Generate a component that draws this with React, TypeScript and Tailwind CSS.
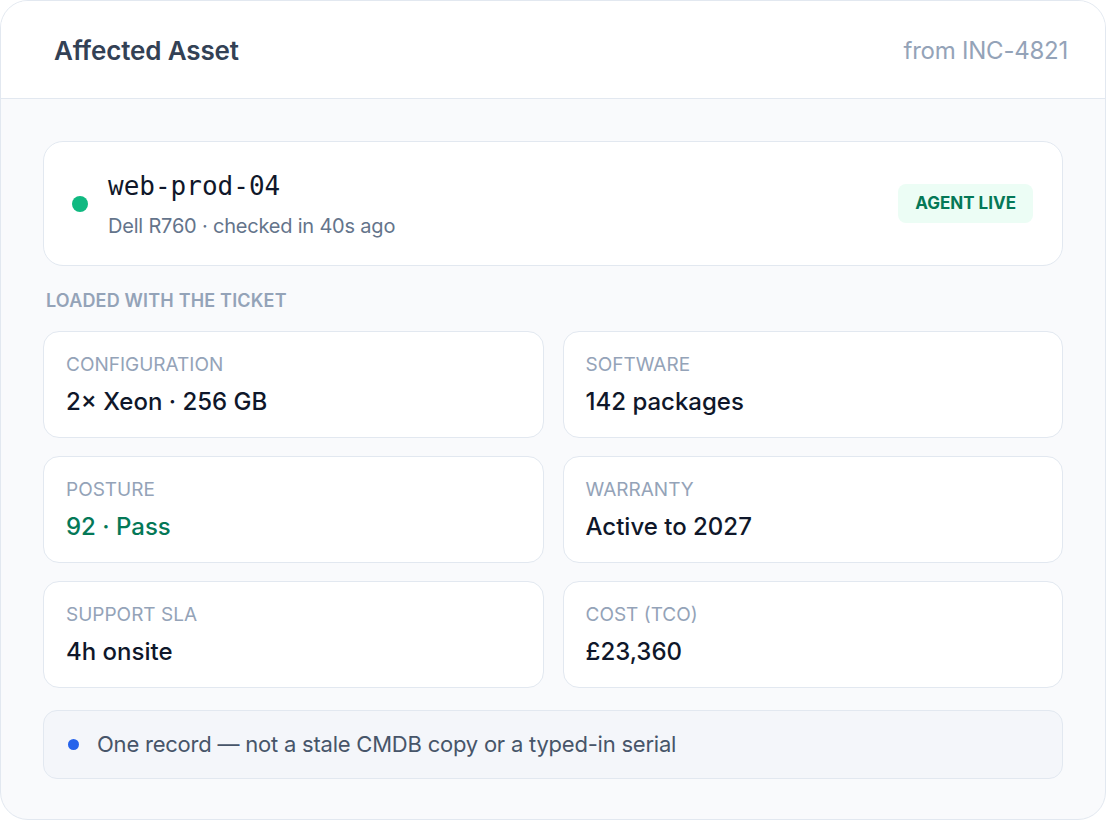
import React from 'react';

const sans = { fontFamily: 'Inter, "Noto Sans", sans-serif' };

interface Fact {
  label: string;
  value: string;
  tone?: 'good';
}

const facts: Fact[] = [
  { label: 'Configuration', value: '2× Xeon · 256 GB' },
  { label: 'Software', value: '142 packages' },
  { label: 'Posture', value: '92 · Pass', tone: 'good' },
  { label: 'Warranty', value: 'Active to 2027' },
  { label: 'Support SLA', value: '4h onsite' },
  { label: 'Cost (TCO)', value: '£23,360' },
];

function FactCard({ fact }: { fact: Fact }) {
  return (
    <div className="h-[107px] rounded-[16px] border border-[#e2e8f0] bg-white px-[22px] pt-[21px]">
      <div className="text-[19px] leading-[24px] uppercase text-[#94a3b8]">{fact.label}</div>
      <div
        className={
          'mt-[9px] text-[24px] leading-[32px] font-medium ' +
          (fact.tone === 'good' ? 'text-[#047857]' : 'text-[#0f172a]')
        }
      >
        {fact.value}
      </div>
    </div>
  );
}

export default function App() {
  return (
    <div className="w-[1106px] h-[820px] bg-white" style={sans}>
      <div className="h-full rounded-[28px] border border-[#e2e8f0] overflow-hidden bg-[#f9fafc] flex flex-col">
        {/* Header */}
        <div className="h-[98px] shrink-0 bg-white border-b border-[#e2e8f0] flex items-center justify-between pt-[2px] pl-[53px] pr-[37px]">
          <h1 className="text-[26px] font-semibold text-[#334155] tracking-[-0.005em]">Affected Asset</h1>
          <span className="text-[24px] text-[#94a3b8] tracking-[-0.01em]">from INC-4821</span>
        </div>

        {/* Body */}
        <div className="px-[42px] pt-[42px]">
          <div className="h-[125px] rounded-[20px] border border-[#e2e8f0] bg-white flex items-center pl-[28px] pr-[29px]">
            <span className="w-[16px] h-[16px] rounded-full bg-[#10b981] shrink-0" />
            <div className="ml-[20px] mt-[2px] flex-1">
              <div
                className="text-[26px] leading-[32px] text-[#0f172a]"
                style={{ fontFamily: '"DejaVu Sans Mono", "Liberation Mono", monospace' }}
              >
                web-prod-04
              </div>
              <div className="mt-[11px] text-[20px] leading-[26px] text-[#64748b] tracking-[-0.01em]">
                Dell R760 · checked in 40s ago
              </div>
            </div>
            <span className="h-[39px] px-[17px] rounded-[8px] bg-[#ecfdf5] text-[#047857] text-[17px] font-bold flex items-center">
              AGENT LIVE
            </span>
          </div>

          <div className="mt-[23px] mb-[18px] pl-[3px] text-[18px] leading-[24px] font-semibold uppercase text-[#94a3b8] tracking-[0.01em]">
            Loaded with the ticket
          </div>

          <div className="grid grid-cols-2 gap-x-[19px] gap-y-[18px]">
            {facts.map((f) => (
              <FactCard key={f.label} fact={f} />
            ))}
          </div>

          <div className="mt-[22px] h-[69px] rounded-[14px] border border-[#e2e8f0] bg-[#f4f6fa] flex items-center pl-[24px]">
            <span className="w-[11px] h-[11px] rounded-full bg-[#2563eb] shrink-0" />
            <span className="ml-[18px] text-[22px] text-[#475569] tracking-[-0.01em]">
              One record — not a stale CMDB copy or a typed-in serial
            </span>
          </div>
        </div>
      </div>
    </div>
  );
}
